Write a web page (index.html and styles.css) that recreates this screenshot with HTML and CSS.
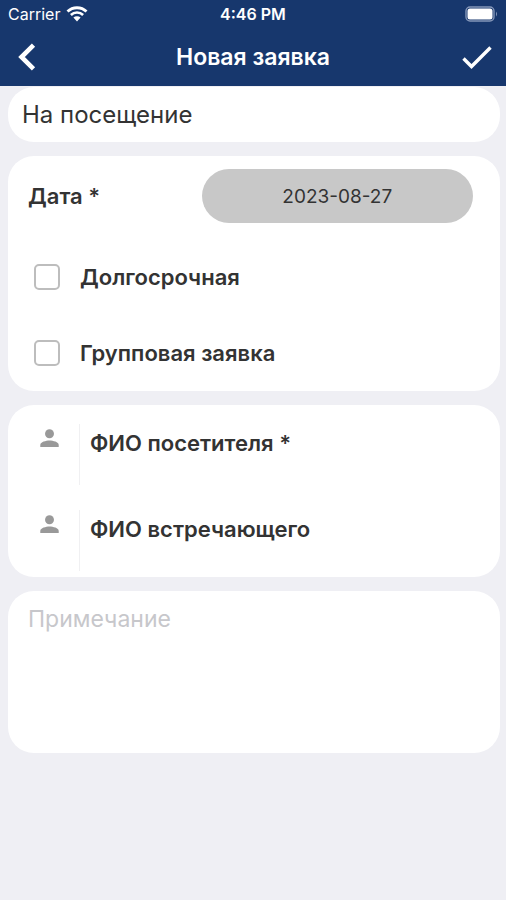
FILE: index.html
```html
<!DOCTYPE html>
<html lang="ru">
<head>
<meta charset="utf-8">
<meta name="viewport" content="width=device-width, initial-scale=1">
<title>Новая заявка</title>
<link rel="stylesheet" href="styles.css">
</head>
<body>
<header class="header">
  <div class="status">
    <div class="carrier">
      <span>Carrier</span>
      <svg class="wifi" viewBox="0 0 22 16" aria-hidden="true">
        <path d="M1.5 5.6a13.6 13.6 0 0 1 19 0" fill="none" stroke="#fff" stroke-width="2.8"/>
        <path d="M4.9 9a8.7 8.7 0 0 1 12.2 0" fill="none" stroke="#fff" stroke-width="2.6"/>
        <path d="M7.4 11.6a5.2 5.2 0 0 1 7.2 0L11 15.4z" fill="#fff"/>
      </svg>
    </div>
    <span class="time">4:46 PM</span>
    <svg class="battery" viewBox="0 0 33 16" aria-hidden="true">
      <rect x="1" y="1" width="28" height="14" rx="4" fill="none" stroke="#8496b8" stroke-width="1.4"/>
      <rect x="2.500" y="2.500" width="25" height="11" rx="2.500" fill="#fff"/>
      <path d="M31 5.5q2 2.500 0 5z" fill="#8496b8"/>
    </svg>
  </div>
  <div class="nav">
    <button class="nav-button" type="button" aria-label="Назад">
      <svg class="back" viewBox="0 0 18 28" aria-hidden="true"><path d="M15.500 2.200L3.500 14l12 11.800" fill="none" stroke="#fff" stroke-width="4.600"/></svg>
    </button>
    <h1 class="title">Новая заявка</h1>
    <button class="nav-button nav-button-end" type="submit" form="request" aria-label="Готово">
      <svg class="done" viewBox="0 0 30 24" aria-hidden="true"><path d="M1.500 13.500L9.500 21.500 28.500 2.500" fill="none" stroke="#fff" stroke-width="3.400"/></svg>
    </button>
  </div>
</header>
<form class="form" id="request">
  <select class="card kind" aria-label="Тип заявки">
    <option>На посещение</option>
  </select>
  <section class="card options">
    <div class="date-row">
      <label class="label" for="date">Дата *</label>
      <input class="date" id="date" type="text" value="2023-08-27">
    </div>
    <label class="check label"><input class="box" type="checkbox"><span>Долгосрочная</span></label>
    <label class="check label"><input class="box" type="checkbox"><span>Групповая заявка</span></label>
  </section>
  <section class="card">
    <div class="person">
      <svg class="person-icon" viewBox="0 0 20 20" aria-hidden="true"><circle cx="10" cy="5" r="4.700"/><path d="M.3 19v-2.200c0-3 6-4.600 9.700-4.600s9.700 1.600 9.700 4.600V19z"/></svg>
      <div class="field">
        <label class="label" for="visitor">ФИО посетителя *</label>
        <input class="name" id="visitor" type="text">
      </div>
    </div>
    <div class="person">
      <svg class="person-icon" viewBox="0 0 20 20" aria-hidden="true"><circle cx="10" cy="5" r="4.700"/><path d="M.3 19v-2.200c0-3 6-4.600 9.700-4.600s9.700 1.600 9.700 4.600V19z"/></svg>
      <div class="field">
        <label class="label" for="host">ФИО встречающего</label>
        <input class="name" id="host" type="text">
      </div>
    </div>
  </section>
  <textarea class="card note" rows="5" placeholder="Примечание" aria-label="Примечание"></textarea>
</form>
</body>
</html>
```
FILE: styles.css
```css
* {
  box-sizing: border-box;
}

body {
  margin: 0;
  min-height: 100vh;
  background: #efeff4;
  color: #333;
  font-family: Inter, "Liberation Sans", sans-serif;
}

button,
input,
select,
textarea {
  margin: 0;
  padding: 0;
  border: 0;
  background: none;
  color: inherit;
  font: inherit;
}

.header {
  background: #17376d;
  color: #fff;
}

.status {
  display: grid;
  grid-template-columns: 1fr auto 1fr;
  align-items: center;
  height: 28px;
  padding: 0 8px;
  font-size: 16px;
  line-height: 20px;
}

.carrier {
  display: flex;
  align-items: center;
  gap: 6px;
}

.wifi {
  width: 22px;
  height: 16px;
}

.time {
  font-weight: 600;
}

.battery {
  justify-self: end;
  width: 33px;
  height: 16px;
}

.nav {
  display: grid;
  grid-template-columns: 1fr auto 1fr;
  align-items: center;
  height: 58px;
  padding: 0 14px;
}

.nav-button {
  display: flex;
  justify-self: start;
}

.nav-button-end {
  justify-self: end;
}

.back {
  width: 18px;
  height: 28px;
  margin-left: 4px;
}

.done {
  width: 30px;
  height: 24px;
}

.title {
  margin: 0;
  font-size: 23px;
  font-weight: 600;
  line-height: 28px;
}

.form {
  display: flex;
  flex-direction: column;
  gap: 14px;
  padding: 1px 6px 0 8px;
}

.card {
  border-radius: 26px;
  background: #fff;
}

.kind {
  appearance: none;
  width: 100%;
  height: 55px;
  padding: 0 14px;
  font-size: 24px;
}

.options {
  padding: 13px 27px 0 20px;
}

.label {
  font-size: 22px;
  font-weight: 600;
  line-height: 28px;
}

.date-row {
  display: flex;
  align-items: center;
  justify-content: space-between;
  margin-bottom: 16px;
}

.date {
  width: 61%;
  height: 54px;
  border-radius: 27px;
  background: #c8c8c8;
  font-size: 19px;
  text-align: center;
}

.check {
  display: flex;
  align-items: center;
  gap: 20px;
  height: 76px;
  padding-left: 6px;
}

.box {
  appearance: none;
  width: 26px;
  height: 26px;
  border: 2px solid #bdbdbd;
  border-radius: 5px;
}

.box:checked {
  background: #17376d;
}

.person {
  display: flex;
  gap: 20px;
  padding: 19px 20px 6px 32px;
}

.person-icon {
  width: 19px;
  height: 19px;
  margin-top: 5px;
  fill: #999;
}

.field {
  display: flex;
  flex: 1;
  flex-direction: column;
  padding: 5px 0 0 10px;
  border-left: 1px solid #f0f0f2;
}

.name {
  width: 100%;
  height: 28px;
  font-size: 22px;
}

.note {
  display: block;
  width: 100%;
  height: 162px;
  padding: 14px 20px;
  resize: none;
  font-size: 23px;
  line-height: 28px;
}

.note::placeholder {
  color: #c7c7cb;
  opacity: 1;
}
```
